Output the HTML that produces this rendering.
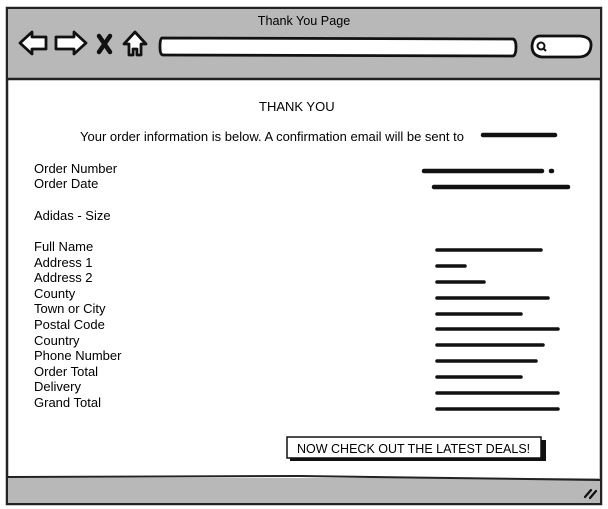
<!DOCTYPE html>
<html><head><style>
body{margin:0;width:608px;height:509px;background:#fff;position:relative;overflow:hidden;font-family:"Liberation Sans",sans-serif;color:#000}
.t{position:absolute;font-size:13px;line-height:15px;white-space:nowrap}
</style></head><body>
<svg width="608" height="509" style="position:absolute;left:0;top:0">
<rect x="7" y="8" width="594" height="496" fill="#fff" stroke="#222" stroke-width="2.5"/>
<rect x="8" y="9" width="592" height="69" fill="#b8b8b8"/>
<line x1="8" y1="79" x2="600" y2="79" stroke="#222" stroke-width="2.5"/>
<rect x="8" y="478" width="592" height="25" fill="#b8b8b8"/>
<path d="M8 477 L300 476 L600 480" stroke="#222" stroke-width="2" fill="none"/>
<text x="304" y="25" font-family="Liberation Sans" font-size="12.6" text-anchor="middle">Thank You Page</text>
<g fill="#fff" stroke="#111" stroke-width="2.8" stroke-linejoin="round">
<path d="M20 43 L32 32 L32 37 L46 37 L46 49 L32 49 L32 54 Z"/>
<path d="M86 43 L74 32 L74 37 L56 37 L56 49 L74 49 L74 54 Z"/>
<path d="M124 44 L135 32 L146 44 L141 44 L141 55 L137 55 L137 49 L133 49 L133 55 L129 55 L129 44 Z"/>
<path d="M162 38 Q160 38 160 47 Q160 55 163 55 L513 56 Q516 55 516 47 Q516 40 513 39 Z"/>
<path d="M540 36 L580 36 Q592 37 591 46 Q590 57 578 57 L542 57 Q532 56 532 46 Q533 36 540 36 Z"/>
</g>
<path d="M99 36 L110 52 M110 36 L99 52" stroke="#111" stroke-width="4.5" stroke-linecap="round"/>
<circle cx="541" cy="46" r="3.5" fill="none" stroke="#111" stroke-width="2"/>
<line x1="543" y1="48" x2="546" y2="51" stroke="#111" stroke-width="2"/>
<path d="M585 497 L591 490 M590 498 L596 491" stroke="#111" stroke-width="2.2" stroke-linecap="round"/>
<rect x="290" y="440" width="256" height="21" fill="#111"/>
<rect x="287" y="437" width="254" height="21" fill="#fff" stroke="#111" stroke-width="1.5"/>
<g stroke="#111" stroke-width="4.5" stroke-linecap="round" fill="none">
<path d="M483 135 L555 135"/><path d="M424 171 L542 171"/><path d="M551 171 L552 171"/><path d="M434 187 L568 187"/>
<path d="M437 250 L541 250" stroke-width="3.5"/><path d="M437 266 L465 266" stroke-width="3.5"/>
<path d="M437 282 L484 282" stroke-width="3.5"/><path d="M437 298 L548 298" stroke-width="3.5"/>
<path d="M437 314 L521 314" stroke-width="3.5"/><path d="M437 329 L558 329" stroke-width="3.5"/>
<path d="M437 345 L543 345" stroke-width="3.5"/><path d="M437 361 L536 361" stroke-width="3.5"/>
<path d="M437 377 L521 377" stroke-width="3.5"/><path d="M437 393 L558 393" stroke-width="3.5"/>
<path d="M437 409 L558 409" stroke-width="3.5"/>
</g>
</svg>
<div class="t" style="left:259px;top:99px">THANK YOU</div>
<div class="t" style="left:80px;top:129px">Your order information is below. A confirmation email will be sent to</div>
<div class="t" style="left:34px;top:161px">Order Number<br>Order Date</div>
<div class="t" style="left:34px;top:208px">Adidas - Size</div>
<div class="t" style="left:34px;top:239px;line-height:15.6px">Full Name<br>Address 1<br>Address 2<br>County<br>Town or City<br>Postal Code<br>Country<br>Phone Number<br>Order Total<br>Delivery<br>Grand Total</div>
<div class="t" style="left:297px;top:442px;font-size:12.5px">NOW CHECK OUT THE LATEST DEALS!</div>
</body></html>
